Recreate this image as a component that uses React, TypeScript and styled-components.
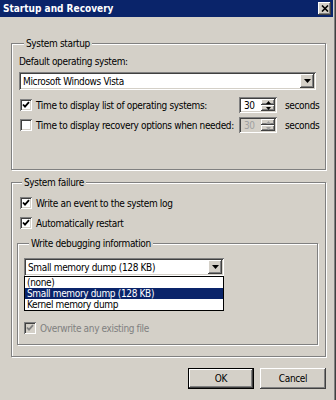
import styled, { createGlobalStyle, css } from 'styled-components';

const GlobalStyle = createGlobalStyle`
  html, body {
    margin: 0;
    padding: 0;
    background: #d4d0c8;
  }
  * {
    box-sizing: border-box;
  }
`;

const raised = css`
  background: #d4d0c8;
  box-shadow: inset -1px -1px #404040, inset 1px 1px #ffffff, inset -2px -2px #808080, inset 2px 2px #d4d0c8;
`;

const sunken = css`
  box-shadow: inset 1px 1px #808080, inset -1px -1px #ffffff, inset 2px 2px #404040, inset -2px -2px #d4d0c8;
`;

const Window = styled.div`
  width: 336px;
  height: 400px;
  padding-right: 3px;
  background: #d4d0c8;
  box-shadow: inset -1px 0 #404040, inset -2px 0 #808080;
  font-family: "DejaVu Sans Condensed", "DejaVu Sans", "Liberation Sans", sans-serif;
  font-stretch: condensed;
  font-size: 10px;
  letter-spacing: -0.35px;
  color: #000;
  display: flex;
  flex-direction: column;
  overflow: hidden;
`;

const TitleBar = styled.div`
  height: 17px;
  background: #0a246a;
  color: #fff;
  font-weight: bold;
  font-size: 10px;
  letter-spacing: 0;
  display: flex;
  align-items: center;
  justify-content: space-between;
  padding: 0 2px 0 3px;
`;

const CloseButton = styled.div`
  ${raised};
  width: 13px;
  height: 13px;
  display: flex;
  align-items: center;
  justify-content: center;
`;

const Body = styled.div`
  padding: 20px 7px 0 11px;
  display: flex;
  flex-direction: column;
`;

const Group = styled.fieldset<{ $pad: string; $gap?: number }>`
  margin: 0 0 ${(p) => p.$gap ?? 0}px 0;
  padding: ${(p) => p.$pad};
  border: 1px solid #808080;
  box-shadow: inset 1px 1px #ffffff, 1px 1px #ffffff;
  min-width: 0;
  display: flex;
  flex-direction: column;
`;

const Legend = styled.legend`
  margin-left: 5px;
  padding: 0 2px;
  line-height: 13px;
  background: #d4d0c8;
`;

const FieldLabel = styled.div`
  line-height: 13px;
  margin-bottom: 4px;
`;

const ComboWrap = styled.div<{ $width: number }>`
  position: relative;
  width: ${(p) => p.$width}px;
`;

const Combo = styled.div`
  ${sunken};
  background: #fff;
  height: 18px;
  display: flex;
  align-items: center;
  padding: 2px;
`;

const ComboText = styled.div`
  flex: 1;
  padding-left: 2px;
  white-space: nowrap;
`;

const ComboButton = styled.div`
  ${raised};
  width: 14px;
  height: 14px;
  display: flex;
  align-items: center;
  justify-content: center;
`;

const DropList = styled.div`
  position: absolute;
  left: 0;
  right: 0;
  top: 100%;
  background: #fff;
  border: 1px solid #000;
  z-index: 2;
`;

const DropItem = styled.div<{ $selected?: boolean }>`
  height: 11px;
  line-height: 11px;
  padding-left: 2px;
  white-space: nowrap;
  background: ${(p) => (p.$selected ? '#0a246a' : 'transparent')};
  color: ${(p) => (p.$selected ? '#fff' : '#000')};
`;

const SpinGrid = styled.div`
  display: grid;
  grid-template-columns: 219px 38px auto;
  grid-auto-rows: 16px;
  row-gap: 4px;
  align-items: center;
  margin: 7px 0 0 1px;
`;

const CheckRow = styled.div<{ $disabled?: boolean; $indent?: number }>`
  display: flex;
  align-items: center;
  gap: 4px;
  height: 16px;
  margin-left: ${(p) => p.$indent ?? 0}px;
  color: ${(p) => (p.$disabled ? '#808080' : '#000')};
  white-space: nowrap;
`;

const CheckBox = styled.span<{ $disabled?: boolean }>`
  ${sunken};
  width: 12px;
  height: 12px;
  flex: none;
  background: ${(p) => (p.$disabled ? '#d4d0c8' : '#fff')};
  display: flex;
  align-items: center;
  justify-content: center;
`;

const Spin = styled.div<{ $disabled?: boolean }>`
  ${sunken};
  height: 16px;
  background: ${(p) => (p.$disabled ? '#d4d0c8' : '#fff')};
  color: ${(p) => (p.$disabled ? '#a0a0a0' : '#000')};
  display: flex;
  align-items: center;
  padding: 2px;
`;

const SpinText = styled.div`
  flex: 1;
  padding-left: 3px;
`;

const SpinButtons = styled.div`
  display: flex;
  flex-direction: column;
  width: 14px;
  height: 12px;
`;

const SpinBtn = styled.div`
  ${raised};
  flex: 1;
  display: flex;
  align-items: center;
  justify-content: center;
`;

const Seconds = styled.div`
  margin-left: 8px;
  white-space: nowrap;
`;

const DebugSpacer = styled.div`
  height: 44px;
`;

const ButtonBar = styled.div`
  display: flex;
  justify-content: flex-end;
  gap: 6px;
  margin-top: 11px;
`;

const Button = styled.div<{ $default?: boolean }>`
  ${raised};
  width: 66px;
  height: 21px;
  display: flex;
  align-items: center;
  justify-content: center;
  ${(p) =>
    p.$default &&
    css`
      box-shadow: inset 0 0 0 1px #000, inset -2px -2px #404040, inset 2px 2px #ffffff, inset -3px -3px #808080;
    `}
`;

function DownArrow({ color = '#000' }: { color?: string }) {
  return (
    <svg width="7" height="4" viewBox="0 0 7 4">
      <path d="M0 0h7L3.5 4z" fill={color} />
    </svg>
  );
}

function SmallArrow({ up, color }: { up?: boolean; color: string }) {
  return (
    <svg width="5" height="3" viewBox="0 0 5 3">
      <path d={up ? 'M2.5 0L5 3H0z' : 'M0 0h5L2.5 3z'} fill={color} />
    </svg>
  );
}

function Check({ checked, disabled }: { checked?: boolean; disabled?: boolean }) {
  return (
    <CheckBox $disabled={disabled}>
      {checked && (
        <svg width="8" height="8" viewBox="0 0 8 8">
          <path d="M1 3.5l2 2.2L7 1.2" fill="none" stroke={disabled ? '#808080' : '#000'} strokeWidth="1.8" />
        </svg>
      )}
    </CheckBox>
  );
}

function SpinBox({ value, disabled }: { value: string; disabled?: boolean }) {
  const c = disabled ? '#a0a0a0' : '#000';
  return (
    <Spin $disabled={disabled}>
      <SpinText>{value}</SpinText>
      <SpinButtons>
        <SpinBtn>
          <SmallArrow up color={c} />
        </SpinBtn>
        <SpinBtn>
          <SmallArrow color={c} />
        </SpinBtn>
      </SpinButtons>
    </Spin>
  );
}

export default function App() {
  return (
    <>
      <GlobalStyle />
      <Window>
        <TitleBar>
          <span>Startup and Recovery</span>
          <CloseButton>
            <svg width="8" height="7" viewBox="0 0 8 7">
              <path d="M1 0.5l6 6M7 0.5l-6 6" stroke="#000" strokeWidth="1.6" />
            </svg>
          </CloseButton>
        </TitleBar>

        <Body>
          <Group $pad="5px 9px 36px 7px" $gap={6}>
            <Legend>System startup</Legend>
            <FieldLabel>Default operating system:</FieldLabel>
            <ComboWrap $width={297}>
              <Combo>
                <ComboText>Microsoft Windows Vista</ComboText>
                <ComboButton>
                  <DownArrow />
                </ComboButton>
              </Combo>
            </ComboWrap>
            <SpinGrid>
              <CheckRow>
                <Check checked />
                Time to display list of operating systems:
              </CheckRow>
              <SpinBox value="30" />
              <Seconds>seconds</Seconds>
              <CheckRow>
                <Check />
                Time to display recovery options when needed:
              </CheckRow>
              <SpinBox value="30" disabled />
              <Seconds>seconds</Seconds>
            </SpinGrid>
          </Group>

          <Group $pad="6px 7px 11px 5px">
            <Legend>System failure</Legend>
            <CheckRow $indent={3}>
              <Check checked />
              Write an event to the system log
            </CheckRow>
            <CheckRow $indent={3} style={{ marginTop: 4 }}>
              <Check checked />
              Automatically restart
            </CheckRow>
            <Group $pad="8px 6px 8px 6px" style={{ marginTop: 6 }}>
              <Legend>Write debugging information</Legend>
              <ComboWrap $width={200}>
                <Combo>
                  <ComboText>Small memory dump (128 KB)</ComboText>
                  <ComboButton>
                    <DownArrow />
                  </ComboButton>
                </Combo>
                <DropList>
                  <DropItem>(none)</DropItem>
                  <DropItem $selected>Small memory dump (128 KB)</DropItem>
                  <DropItem>Kernel memory dump</DropItem>
                </DropList>
              </ComboWrap>
              <DebugSpacer />
              <CheckRow $disabled>
                <Check checked disabled />
                Overwrite any existing file
              </CheckRow>
            </Group>
          </Group>

          <ButtonBar>
            <Button $default>OK</Button>
            <Button>Cancel</Button>
          </ButtonBar>
        </Body>
      </Window>
    </>
  );
}
